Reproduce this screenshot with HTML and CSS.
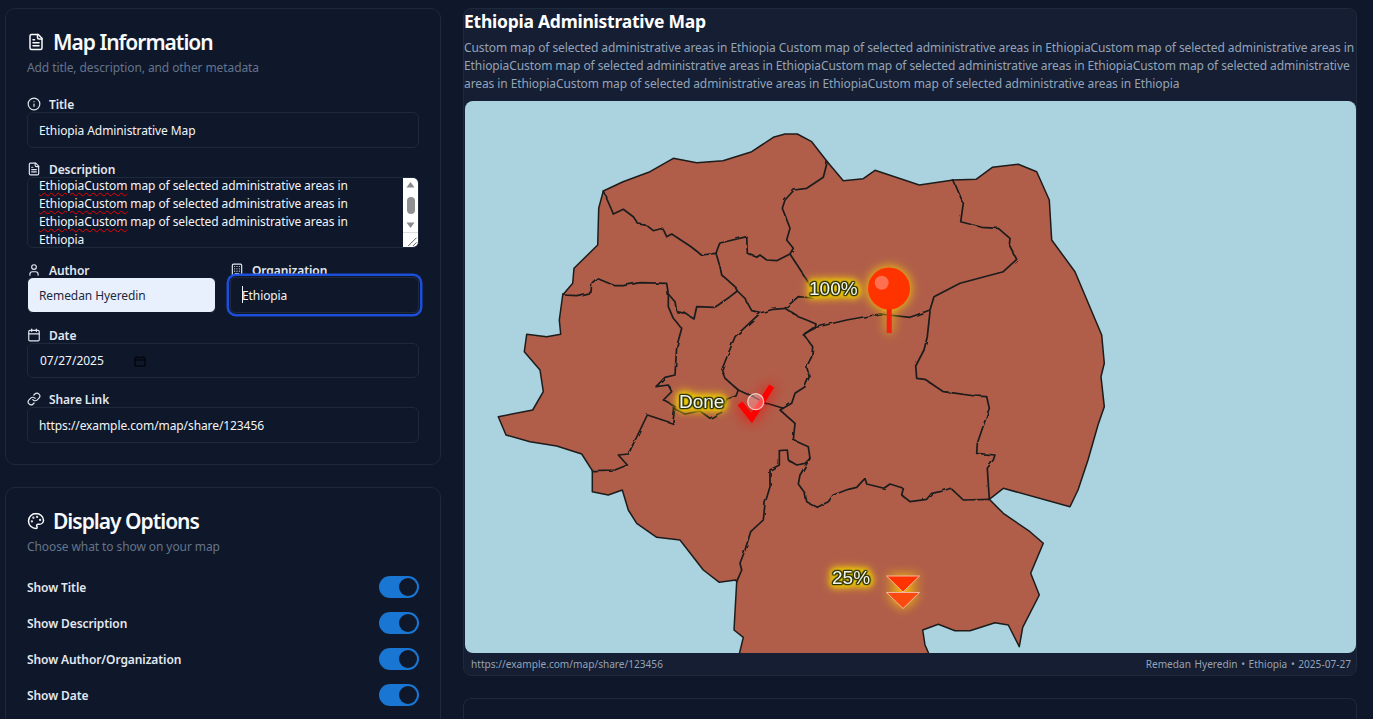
FILE: index.html
```html
<!DOCTYPE html>
<html lang="en">
<head>
<meta charset="utf-8">
<title>Ethiopia Administrative Map</title>
<link rel="stylesheet" href="styles.css">
</head>
<body>
<div class="layout">
  <aside class="side">
    <section class="card">
      <h2 class="card-title"><svg class="icon-lg" viewBox="0 0 24 24"><path d="M15 2H6a2 2 0 0 0-2 2v16a2 2 0 0 0 2 2h12a2 2 0 0 0 2-2V7Z"/><path d="M14 2v4a2 2 0 0 0 2 2h4"/><path d="M10 9H8"/><path d="M16 13H8"/><path d="M16 17H8"/></svg>Map Information</h2>
      <p class="card-sub">Add title, description, and other metadata</p>
      <div class="fields">
        <div class="field">
          <label class="label"><svg class="icon" viewBox="0 0 24 24"><circle cx="12" cy="12" r="10"/><path d="M12 16v-4"/><path d="M12 8h.01"/></svg>Title</label>
          <input class="input" value="Ethiopia Administrative Map">
        </div>
        <div class="field">
          <label class="label"><svg class="icon" viewBox="0 0 24 24"><path d="M15 2H6a2 2 0 0 0-2 2v16a2 2 0 0 0 2 2h12a2 2 0 0 0 2-2V7Z"/><path d="M14 2v4a2 2 0 0 0 2 2h4"/><path d="M10 9H8"/><path d="M16 13H8"/><path d="M16 17H8"/></svg>Description</label>
          <div class="textarea">
            <div class="ta-text"><span class="typo">EthiopiaCustom</span> map of selected administrative areas in<br><span class="typo">EthiopiaCustom</span> map of selected administrative areas in<br><span class="typo">EthiopiaCustom</span> map of selected administrative areas in<br>Ethiopia</div>
            <div class="scrollbar">
              <svg class="sb-arrow" viewBox="0 0 15 14"><path d="M3.500 9.500h8L7.500 4z"/></svg>
              <span class="sb-track"><span class="sb-thumb"></span></span>
              <svg class="sb-arrow" viewBox="0 0 15 14"><path d="M3.500 4.500h8L7.500 10z"/></svg>
              <svg class="sb-grip" viewBox="0 0 15 15"><path d="M5 14 14 5M10 14l4-4"/></svg>
            </div>
          </div>
        </div>
        <div class="two-col">
          <div class="field">
            <label class="label"><svg class="icon" viewBox="0 0 24 24"><path d="M19 21v-2a4 4 0 0 0-4-4H9a4 4 0 0 0-4 4v2"/><circle cx="12" cy="7" r="4"/></svg>Author</label>
            <input class="input input-filled" value="Remedan Hyeredin">
          </div>
          <div class="field">
            <label class="label"><svg class="icon" viewBox="0 0 24 24"><rect x="4" y="2" width="16" height="20" rx="2"/><path d="M9 22v-4h6v4"/><path d="M8 6h.01M16 6h.01M12 6h.01M12 10h.01M12 14h.01M16 10h.01M16 14h.01M8 10h.01M8 14h.01"/></svg>Organization</label>
            <div class="focus-wrap">
              <input class="input input-focus" value="Ethiopia">
              <span class="caret"></span>
            </div>
          </div>
        </div>
        <div class="field">
          <label class="label"><svg class="icon" viewBox="0 0 24 24"><path d="M8 2v4"/><path d="M16 2v4"/><rect x="3" y="4" width="18" height="18" rx="2"/><path d="M3 10h18"/></svg>Date</label>
          <div class="input date-wrap"><span>07/27/2025</span><svg class="date-icon" viewBox="0 0 12 12"><path d="M1.500 2.500h9a.5.5 0 0 1 .5.500v7.500a.5.5 0 0 1-.5.500h-9a.5.5 0 0 1-.5-.5V3a.5.5 0 0 1 .5-.5zM1 5h10M3 1v2M9 1v2"/></svg></div>
        </div>
        <div class="field">
          <label class="label"><svg class="icon" viewBox="0 0 24 24"><path d="M10 13a5 5 0 0 0 7.540.54l3-3a5 5 0 0 0-7.070-7.070l-1.720 1.710"/><path d="M14 11a5 5 0 0 0-7.540-.54l-3 3a5 5 0 0 0 7.070 7.070l1.710-1.710"/></svg>Share Link</label>
          <input class="input input-last" value="https://example.com/map/share/123456">
        </div>
      </div>
    </section>

    <section class="card">
      <h2 class="card-title"><svg class="icon-lg" viewBox="0 0 24 24"><circle cx="13.500" cy="6.500" r=".5" class="dot"/><circle cx="17.500" cy="10.500" r=".5" class="dot"/><circle cx="8.500" cy="7.500" r=".5" class="dot"/><circle cx="6.500" cy="12.500" r=".5" class="dot"/><path d="M12 2C6.500 2 2 6.500 2 12s4.500 10 10 10c.926 0 1.648-.746 1.648-1.688 0-.437-.18-.835-.437-1.125-.29-.289-.438-.652-.438-1.125a1.640 1.640 0 0 1 1.668-1.668h1.996c3.051 0 5.555-2.503 5.555-5.554C21.965 6.012 17.461 2 11.994 2z"/></svg>Display Options</h2>
      <p class="card-sub">Choose what to show on your map</p>
      <div class="toggles">
        <div class="toggle-row"><span>Show Title</span><span class="toggle"><span class="thumb"></span></span></div>
        <div class="toggle-row"><span>Show Description</span><span class="toggle"><span class="thumb"></span></span></div>
        <div class="toggle-row"><span>Show Author/Organization</span><span class="toggle"><span class="thumb"></span></span></div>
        <div class="toggle-row"><span>Show Date</span><span class="toggle"><span class="thumb"></span></span></div>
      </div>
    </section>
  </aside>

  <main class="main">
    <section class="preview">
      <h1 class="map-title">Ethiopia Administrative Map</h1>
      <p class="map-desc">Custom map of selected administrative areas in Ethiopia Custom map of selected administrative areas in EthiopiaCustom map of selected administrative areas in EthiopiaCustom map of selected administrative areas in EthiopiaCustom map of selected administrative areas in EthiopiaCustom map of selected administrative areas in EthiopiaCustom map of selected administrative areas in EthiopiaCustom map of selected administrative areas in Ethiopia</p>
      <div class="map">
        <svg class="map-svg" viewBox="465 101 891 552">
          <defs>
            <filter id="rough" x="-5%" y="-5%" width="110%" height="110%"><feTurbulence type="fractalNoise" baseFrequency="0.1" numOctaves="2" seed="4"/><feDisplacementMap in="SourceGraphic" scale="3"/></filter>
          </defs>
          <path class="land" d="M603.300 191 623 181.700 650 171.700 673.300 158.300 696.700 162.700 723 160.700 751.700 151.700 773.300 137.300 785 134 797.300 134 811.700 141.700 827.300 161.700 843.300 180.700 863.300 178.700 875 170.300 919.300 185 953.300 180 976 179.300 992.300 167.300 1018.300 164.300 1036.700 171.700 1049.300 200 1051.700 240 1075 271.700 1101.700 335 1104.300 363.300 1101 376.700 1104.300 406.700 1098 425 1088 460 1078 490 1070 506.700 1003.300 488.300 989.300 499.300 1003.300 513.300 1030 531.700 1043.300 543.300 1030.700 573.300 1039.300 595 1022.700 627.300 1019.300 646.700 1008.300 625 995 622.700 970 630.700 955 630.700 938.300 624.300 922.700 630 925 645 929 654 739.300 654 743.300 637.300 734 630 736.700 581.700 735.700 580 719.300 582.300 703.300 570 680 540 656.700 537.300 636.700 523.300 628.300 510 622.300 490 608.300 495 592.300 491.700 592.300 470.700 581.700 454 556.700 446 530 441.700 506 435 498.300 416.700 532.700 410 543.300 391.700 540 370 524.300 351.700 526.700 334.300 546.700 336.700 560.700 334.300 559.300 320 562.700 295 572.700 283.300 574 268.300 597.700 245 598.700 208.300Z"/>
          <g class="borders">
          <path class="border" d="M603.300 191 611.700 210 613.300 214 623.300 209.300 633.300 216.700 638.300 224 646.700 225.300 653.300 230.700 662.700 228.300 666.700 236.700 671.700 234 690 246 701.700 255 716 253.300"/>
          <path class="border" d="M716 253.300 719 245 720 243 746.700 236.700 747.300 253.300 756.700 257.300 760 255 766.700 260 776.700 260.700 790 254 793.300 248.300 786.700 240 790 228.300 782.300 208.300 785 200 794 190 806.700 188.300 823.300 177.300 827.300 161.700"/>
          <path class="border" d="M716 253.300 720 266.700 721.700 275 728.300 280.700 735 286.700 737.300 291 730 296.700 715 307.300 696.700 306.700 694 319 685 313.300 676.700 311.700 675 301.700 668.300 294 666.700 283.300 640 282.700 623.300 285.700 615 285.700 596.700 278.300 591.700 283.300 591 292.300 576.700 295.700 562.700 295"/>
          <path class="border" d="M668.300 294 668.300 306.700 673.300 318.300 681.700 328.300 676.700 346.700 675 375 665 377.300 656 386.700 668.300 385 671.700 391.700 663.300 400 675 406.700 672.700 423.300 647.300 415 636.700 437 628.300 454 618.300 455 627.300 465 615 470 592.300 470.700"/>
          <path class="border" d="M737.300 291 745 298.300 751.700 310.700 760.700 312.700 773.300 309.300 785 308.300 798.300 296.700 813 298"/>
          <path class="border" d="M790 254 805 277 808 282"/>
          <path class="border" d="M803.300 335 813 328 846.700 320 880 314 910 317.300 930 310 934 296.700 960 283.300 1003.300 271.700 1016.700 259.300 1009.300 245 1010 238.300 998.300 228.300 981.700 227.300 960.700 221.700 963.300 203.300 953.300 180"/>
          <path class="border" d="M930 311.700 927.300 336.700 924 350 915.700 366 916.700 378.300 925 379.300 943.300 391.700 956.700 393.300 975 396 986.700 396.700 989.300 408.300 977.300 443.300 976.700 453.300 995 455 993.300 460 987.300 468.300 989.300 499.300"/>
          <path class="border" d="M989.300 499.300 963.300 500 951 488.300 940 491.700 931.700 493.300 926.700 499.300 910 501.700 901.700 495 903.300 488.300 890 484 884 488.300 866.700 484 865 478.300 856.700 487.300 848.300 489.300 833.300 495 828.300 501.700 817.300 507.300 806.700 501.700 805 493.300 798.300 484 800 475 810 458.300 808.300 446.700 793.300 440 795 423.300 780 410 791.700 403.300 795 393.300 805 386.700 809.300 376.700 806.700 366.700 811.700 356.700 812.700 346.700 804 335"/>
          <path class="border" d="M760.700 312.700 735 336.700 721.700 370 725 378.300 738.300 390 766.700 403.300 783.300 408.300"/>
          <path class="border" d="M738.300 390 736 396 727 399 722 412 710 418.300 700 411 685 414 673 408"/>
          <path class="border" d="M785 308.300 798.300 316.700 806.700 320 816 324 815 328.300 805 333.300"/>
          <path class="border" d="M810 458.300 805 463.300 796.700 465 788.300 460 787.300 450 779.300 450.700 779.300 465 770 470 770 486.700 765 503.300 763.300 520 750.700 531.700 745 550 740 563.300 741.700 570 736.700 581.700"/>
          </g>
          <path class="coast" d="M603.300 191 623 181.700 650 171.700 673.300 158.300 696.700 162.700 723 160.700 751.700 151.700 773.300 137.300 785 134 797.300 134 811.700 141.700 827.300 161.700 843.300 180.700 863.300 178.700 875 170.300 919.300 185 953.300 180 976 179.300 992.300 167.300 1018.300 164.300 1036.700 171.700 1049.300 200 1051.700 240 1075 271.700 1101.700 335 1104.300 363.300 1101 376.700 1104.300 406.700 1098 425 1088 460 1078 490 1070 506.700 1003.300 488.300 989.300 499.300 1003.300 513.300 1030 531.700 1043.300 543.300 1030.700 573.300 1039.300 595 1022.700 627.300 1019.300 646.700 1008.300 625 995 622.700 970 630.700 955 630.700 938.300 624.300 922.700 630 925 645 929 654M739.300 654 743.300 637.300 734 630 736.700 581.700 735.700 580 719.300 582.300 703.300 570 680 540 656.700 537.300 636.700 523.300 628.300 510 622.300 490 608.300 495 592.300 491.700 592.300 470.700 581.700 454 556.700 446 530 441.700 506 435 498.300 416.700 532.700 410 543.300 391.700 540 370 524.300 351.700 526.700 334.300 546.700 336.700 560.700 334.300 559.300 320 562.700 295 572.700 283.300 574 268.300 597.700 245 598.700 208.300 603.300 191"/>
          <g class="glow-pin">
            <rect class="pin-stem" x="886.700" y="308" width="5" height="25"/>
            <circle class="pin-head" cx="889" cy="288.500" r="21"/>
            <circle class="pin-shine" cx="881.700" cy="282.700" r="7"/>
          </g>
          <g class="glow-check">
            <path class="check" d="M740 403.300 751.700 418 771.700 386"/>
          </g>
          <circle class="check-dot" cx="755.700" cy="401.700" r="8"/>
          <g class="glow-tri">
            <path class="tri" d="M886.500 576h33l-16.500 16z"/>
            <path class="tri tri-low" d="M886.500 592.500h33l-16.500 16z"/>
          </g>
        </svg>
        <span class="map-label label-100">100%</span>
        <span class="map-label label-done">Done</span>
        <span class="map-label label-25">25%</span>
      </div>
      <div class="map-foot"><span>https://example.com/map/share/123456</span><span class="foot-right">Remedan Hyeredin • Ethiopia • 2025-07-27</span></div>
    </section>
    <section class="next-card"></section>
  </main>
</div>
</body>
</html>
```
FILE: styles.css
```css
* { box-sizing: border-box; }
html, body { margin: 0; height: 719px; overflow: hidden; background: #0f172a; }
body { font-family: "Noto Sans", sans-serif; color: #f1f5f9; }
.layout { display: flex; gap: 22px; padding: 8px 16px 0 5px; height: 719px; overflow: hidden; }
.side { width: 436px; flex: none; display: flex; flex-direction: column; gap: 22.500px; }
.main { flex: 1; min-width: 0; display: flex; flex-direction: column; gap: 22px; }
.card { border: 1px solid #1e293b; border-radius: 10px; background: #0f172a; padding: 17px 21px 21px; }
.card-title { display: flex; align-items: center; gap: 8px; margin: 0; height: 32px; padding-bottom: 1px; font-size: 21px; font-weight: 600; letter-spacing: -1px; color: #f8fafc; }
.icon-lg { width: 18px; height: 18px; fill: none; stroke: currentColor; stroke-width: 2; stroke-linecap: round; stroke-linejoin: round; flex: none; }
.dot { fill: currentColor; }
.card-sub { margin: 0 0 18px; height: 20px; line-height: 20px; font-size: 12px; letter-spacing: -0.090px; color: #64748b; }
.fields { display: flex; flex-direction: column; gap: 13px; }
.field { display: flex; flex-direction: column; min-width: 0; }
.label { display: flex; align-items: center; gap: 8px; height: 16px; font-size: 12px; font-weight: 600; letter-spacing: -0.090px; color: #e2e8f0; }
.two-col .label { height: 15px; padding-top: 1px; }
.icon { width: 14px; height: 14px; fill: none; stroke: currentColor; stroke-width: 2; stroke-linecap: round; stroke-linejoin: round; flex: none; }
.input { display: block; width: 100%; height: 36px; padding: 0 11px; border: 1px solid #1e293b; border-radius: 6px; background: transparent; color: #f1f5f9; font: 12px "Noto Sans", sans-serif; letter-spacing: -0.090px; outline: none; }
.input-filled { background: #e8f0fe; color: #1e293b; border-color: #0f172a; }
.two-col { display: grid; grid-template-columns: 189px 189px; gap: 14px; margin-bottom: 1px; }
.focus-wrap { position: relative; }
.input-focus { box-shadow: 0 0 0 1px #0f172a, 0 0 0 3.500px #1d4ed8; border-radius: 6px; }
.caret { position: absolute; left: 12px; top: 9px; width: 1px; height: 17px; background: #f1f5f9; }
.field .date-wrap { display: flex; align-items: center; height: 35.200px; padding-left: 12px; gap: 30px; letter-spacing: 0; }
.date-icon { width: 12px; height: 12px; fill: none; stroke: #05080f; stroke-width: 1.600; }
.field .input-last { height: 35.600px; padding-top: 1px; }
.textarea { display: flex; height: 71px; margin-bottom: 1px; border: 1px solid #1e293b; border-radius: 6px; overflow: hidden; }
.ta-text { flex: 1; padding: 0 11px; font-size: 12px; letter-spacing: -0.090px; line-height: 18px; color: #f1f5f9; margin-top: -1px; }
.typo { text-decoration: underline wavy #f00000 1.300px; text-underline-offset: 2px; }
.scrollbar { width: 15px; flex: none; display: flex; flex-direction: column; align-items: center; background: #fff; }
.sb-arrow { width: 15px; height: 14px; fill: #8a8a8a; flex: none; }
.sb-track { height: 27px; width: 15px; display: flex; justify-content: center; align-items: center; }
.sb-thumb { display: block; width: 8px; height: 17px; border-radius: 4px; background: #909090; }
.sb-grip { width: 15px; height: 15px; flex: none; fill: none; stroke: #555; stroke-width: 1; border-top: 1px solid #ddd; }
.toggles { display: flex; flex-direction: column; gap: 14px; margin-top: 19px; }
.toggle-row { display: flex; justify-content: space-between; align-items: center; height: 22px; font-size: 12px; font-weight: 600; letter-spacing: -0.090px; color: #e2e8f0; }
.toggle { display: flex; justify-content: flex-end; align-items: center; width: 40px; height: 22px; border-radius: 11px; background: #1976d2; padding-right: 2px; }
.thumb { width: 18px; height: 18px; border-radius: 50%; background: #0f172a; }
.preview { flex: none; height: 668px; border: 1px solid #1e293b; border-radius: 8px; background: #151e32; }
.map-title { margin: 0; height: 27px; line-height: 25px; font-size: 17.500px; font-weight: 700; letter-spacing: -0.250px; color: #fff; }
.map-desc { margin: 0 0 8px; height: 57px; padding-top: 3px; font-size: 12px; letter-spacing: -0.090px; line-height: 18px; color: #94a3b8; }
.map { position: relative; width: 891px; height: 552px; margin-left: 1px; border-radius: 8px; overflow: hidden; background: #aad3df; }
.map-svg { display: block; width: 891px; height: 552px; }
.land { fill: #b05e4a; }
.border, .coast { fill: none; stroke: #1c1c1c; stroke-linejoin: round; stroke-linecap: round; }
.border { stroke-width: 1.700; }
.coast { stroke-width: 1.500; }
.borders { filter: url(#rough); }
.glow-pin { filter: drop-shadow(0 0 6px #ffd700); }
.pin-stem { fill: #f5200f; }
.pin-head { fill: #ff3300; }
.pin-shine { fill: #ff7050; }
.glow-check { filter: drop-shadow(0 0 7px #ff0000); }
.check { fill: none; stroke: #ff0000; stroke-width: 6; }
.check-dot { fill: rgba(255, 230, 230, .35); stroke: rgba(255, 255, 255, .7); stroke-width: 1.200; }
.glow-tri { filter: drop-shadow(0 0 6px #ffc800); }
.tri { fill: #ff3300; stroke: #f5b5a0; stroke-width: 1; }
.tri-low { fill: #fb4a10; }
.map-label { position: absolute; font: 19px/22px "Liberation Sans", Arial, sans-serif; color: #f4f4ee; text-shadow: 1.200px 0 1px #2e3300, -1.200px 0 1px #2e3300, 0 1.200px 1px #2e3300, 0 -1.200px 1px #2e3300, 1px 1px 1px #2e3300, -1px -1px 1px #2e3300, 1px -1px 1px #2e3300, -1px 1px 1px #2e3300; filter: drop-shadow(0 0 2px #e6c800) drop-shadow(0 0 3px #e6c800) drop-shadow(0 0 4px rgba(255, 215, 0, .7)); }
.label-100 { left: 344px; top: 177px; }
.label-done { left: 214px; top: 290px; }
.label-25 { left: 367px; top: 466px; }
.map-foot { display: flex; justify-content: space-between; align-items: center; height: 21px; padding: 0 5px 0 7px; font-size: 10.100px; color: #94a3b8; }
.foot-right { word-spacing: 1px; }
.next-card { flex: 1; border: 1px solid #1e293b; border-radius: 8px 8px 0 0; border-bottom: 0; background: #0f172a; }
```
